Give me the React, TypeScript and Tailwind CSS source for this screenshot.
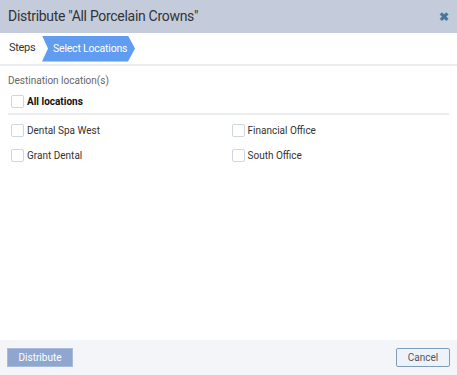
import React from 'react';

const locations = [
  ['Dental Spa West', 'Financial Office'],
  ['Grant Dental', 'South Office'],
];

function Box() {
  return <span className="w-[13px] h-[13px] border border-[#cfd6e0] rounded-[2px] bg-white shrink-0" />;
}

export default function App() {
  return (
    <div className="w-[457px] h-[375px] flex flex-col bg-white text-[#333] font-['Roboto',sans-serif] overflow-hidden">
      <div className="h-[33px] bg-[#c4ccdc] flex items-center justify-between pl-2 pr-[8px]">
        <span className="text-[14px] tracking-[-0.3px] text-[#333]">Distribute "All Porcelain Crowns"</span>
        <span className="text-[#4d7696] text-[12px] font-bold leading-none">✖</span>
      </div>
      <div className="h-[33px] flex items-center border-b-2 border-[#ebedf0]">
        <span className="text-[11px] tracking-[-0.3px] pl-[9px] w-[42px]">Steps</span>
        <div className="h-[26px] w-[93px] bg-[#609df0] text-white text-[10.5px] tracking-[-0.2px] whitespace-nowrap flex items-center pl-[11px] [clip-path:polygon(0_0,86px_0,100%_50%,86px_100%,0_100%,6px_50%)]">
          Select Locations
        </div>
      </div>
      <div className="flex-1 px-2 pt-[8px]">
        <div className="text-[10px] leading-[14px] text-[#666]">Destination location(s)</div>
        <div className="flex items-center gap-[3px] pl-[3px] mt-[6px] h-[14px]">
          <Box />
          <span className="text-[10px] font-bold text-[#111]">All locations</span>
        </div>
        <div className="border-b-2 border-[#ebedf0] mt-[5px]" />
        <div className="flex flex-col gap-[11px] mt-[8px]">
          {locations.map((row) => (
            <div key={row[0]} className="grid grid-cols-2 h-[14px]">
              {row.map((name) => (
                <div key={name} className="flex items-center gap-[3px] pl-[3px]">
                  <Box />
                  <span className="text-[10px] text-[#333]">{name}</span>
                </div>
              ))}
            </div>
          ))}
        </div>
      </div>
      <div className="h-[35px] bg-[#f3f5f8] flex items-start justify-between pl-[7px] pr-[7px] pt-[8px]">
        <button className="h-[19px] w-[66px] bg-[#8fa6cf] text-white text-[10px] border border-[#a9bcdc]">Distribute</button>
        <button className="h-[19px] w-[54px] bg-[#eef3fb] text-[#555] text-[10px] border border-[#7e9db8] rounded-[2px]">Cancel</button>
      </div>
    </div>
  );
}
